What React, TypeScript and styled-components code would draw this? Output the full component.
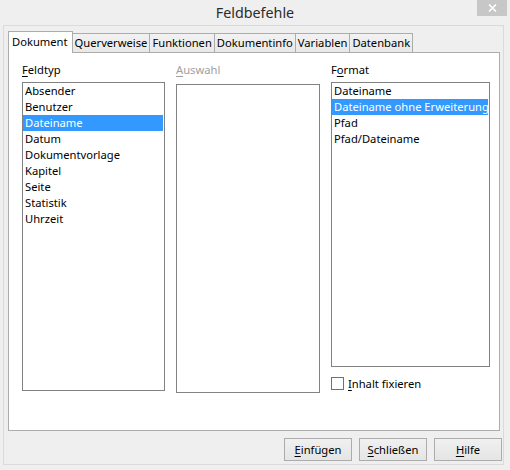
import React from 'react';
import styled, { createGlobalStyle } from 'styled-components';

const GlobalStyle = createGlobalStyle`
  html, body {
    margin: 0;
    padding: 0;
    background: #efefef;
  }
  body {
    font-family: "Segoe UI", "Noto Sans", "Liberation Sans", sans-serif;
    font-size: 11.2px;
    color: #000;
  }
`;

const Window = styled.div`
  width: 510px;
  height: 470px;
  display: flex;
  flex-direction: column;
  background: #efefef;
  overflow: hidden;
`;

const TitleBar = styled.div`
  height: 25px;
  flex: none;
  display: grid;
  grid-template-columns: 1fr auto 1fr;
`;

const Title = styled.div`
  grid-column: 2;
  font-size: 14.3px;
  line-height: 25px;
  color: #2b2b2b;
`;

const CloseButton = styled.div`
  grid-column: 3;
  justify-self: end;
  width: 30px;
  height: 16px;
  margin-right: 3px;
  background: #c7c7c7;
  display: flex;
  align-items: center;
  justify-content: center;
`;

const Frame = styled.div`
  flex: 1;
  margin: 0 6px 5px 3px;
  border: 1px solid #dadada;
  padding: 5px 1px 3px 4px;
  display: flex;
  flex-direction: column;
  min-height: 0;
`;

const TabBar = styled.div`
  display: flex;
  align-items: flex-end;
  height: 21px;
  flex: none;
`;

const Tab = styled.div<{ $active?: boolean }>`
  position: relative;
  box-sizing: border-box;
  border: 1px solid #acacac;
  border-bottom: none;
  margin-left: -1px;
  line-height: 17px;
  white-space: nowrap;
  ${p =>
    p.$active
      ? `
    height: 22px;
    margin-bottom: -1px;
    margin-left: 0;
    padding: 1px 4px 0 3px;
    background: #fff;
    z-index: 1;
  `
      : `
    height: 19px;
    padding: 0 2px 0 2px;
    background: linear-gradient(#f2f2f2, #e8e8e8);
  `}
`;

const Panel = styled.div`
  flex: 1;
  margin-right: 2px;
  background: #fff;
  border: 1px solid #acacac;
  padding: 9px 9px 0 13px;
  display: grid;
  grid-template-columns: 143px 144px 159px;
  column-gap: 11px;
  align-items: start;
  min-height: 0;
`;

const Column = styled.div`
  display: flex;
  flex-direction: column;
`;

const Label = styled.div<{ $disabled?: boolean }>`
  line-height: 16px;
  height: 16px;
  margin-bottom: 4px;
  color: ${p => (p.$disabled ? '#a0a0a0' : '#000')};
`;

const Key = styled.span`
  text-decoration: underline;
  text-underline-offset: 2px;
`;

const ListBox = styled.div<{ $height: number; $offset?: number }>`
  box-sizing: border-box;
  height: ${p => p.$height}px;
  margin-top: ${p => p.$offset ?? 0}px;
  border: 1px solid #828282;
  background: #fff;
  padding: 0 1px 0 0;
  overflow: hidden;
`;

const ListItem = styled.div<{ $selected?: boolean }>`
  height: 16px;
  line-height: 16px;
  padding: 0 2px;
  white-space: nowrap;
  background: ${p => (p.$selected ? '#3399ff' : 'transparent')};
  color: ${p => (p.$selected ? '#fff' : '#000')};
`;

const CheckRow = styled.label`
  display: flex;
  align-items: center;
  gap: 4px;
  margin-top: 10px;
  line-height: 13px;
`;

const CheckBox = styled.span`
  box-sizing: border-box;
  width: 13px;
  height: 13px;
  border: 1px solid #707070;
  background: #fff;
`;

const ButtonRow = styled.div`
  display: flex;
  justify-content: flex-end;
  gap: 7px;
  margin-top: 7px;
  flex: none;
`;

const Button = styled.div`
  box-sizing: border-box;
  width: 68px;
  height: 23px;
  border: 1px solid #acacac;
  background: linear-gradient(#f0f0f0, #e5e5e5);
  display: flex;
  align-items: center;
  justify-content: center;
  line-height: 16px;
`;

const fieldTypes = [
  'Absender',
  'Benutzer',
  'Dateiname',
  'Datum',
  'Dokumentvorlage',
  'Kapitel',
  'Seite',
  'Statistik',
  'Uhrzeit',
];

const formats = ['Dateiname', 'Dateiname ohne Erweiterung', 'Pfad', 'Pfad/Dateiname'];

const tabs = ['Dokument', 'Querverweise', 'Funktionen', 'Dokumentinfo', 'Variablen', 'Datenbank'];

const App: React.FC = () => {
  return (
    <>
      <GlobalStyle />
      <Window>
        <TitleBar>
          <Title>Feldbefehle</Title>
          <CloseButton>
            <svg width="9" height="8" viewBox="0 0 9 8">
              <path d="M1 0.5 L8 7.5 M8 0.5 L1 7.5" stroke="#fff" strokeWidth="1.6" />
            </svg>
          </CloseButton>
        </TitleBar>
        <Frame>
          <TabBar>
            {tabs.map((t, i) => (
              <Tab key={t} $active={i === 0}>
                {t}
              </Tab>
            ))}
          </TabBar>
          <Panel>
            <Column>
              <Label>
                <Key>F</Key>eldtyp
              </Label>
              <ListBox $height={309}>
                {fieldTypes.map(f => (
                  <ListItem key={f} $selected={f === 'Dateiname'}>
                    {f}
                  </ListItem>
                ))}
              </ListBox>
            </Column>
            <Column>
              <Label $disabled>
                <Key>A</Key>uswahl
              </Label>
              <ListBox $height={309} $offset={2} />
            </Column>
            <Column>
              <Label>
                F<Key>o</Key>rmat
              </Label>
              <ListBox $height={285}>
                {formats.map(f => (
                  <ListItem key={f} $selected={f === 'Dateiname ohne Erweiterung'}>
                    {f}
                  </ListItem>
                ))}
              </ListBox>
              <CheckRow>
                <CheckBox />
                <span>
                  <Key>I</Key>nhalt fixieren
                </span>
              </CheckRow>
            </Column>
          </Panel>
          <ButtonRow>
            <Button>
              <span>
                <Key>E</Key>infügen
              </span>
            </Button>
            <Button>
              <span>
                <Key>S</Key>chließen
              </span>
            </Button>
            <Button>
              <span>
                <Key>H</Key>ilfe
              </span>
            </Button>
          </ButtonRow>
        </Frame>
      </Window>
    </>
  );
};

export default App;
